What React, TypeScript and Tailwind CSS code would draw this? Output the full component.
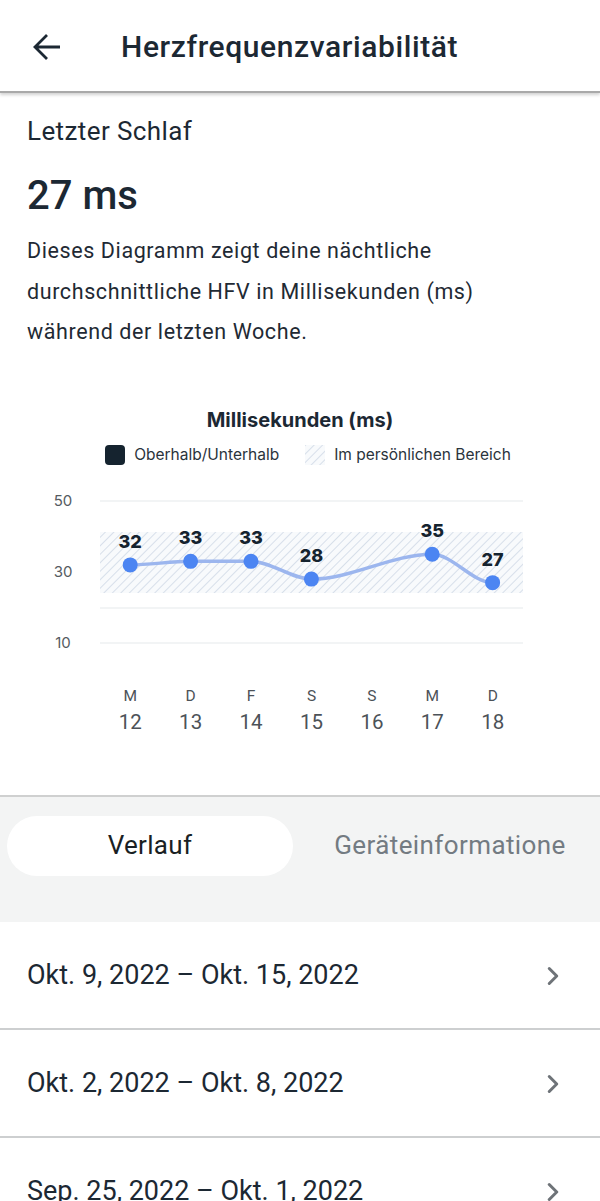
import { ChevronRight } from 'lucide-react';

const points = [
  { day: 'M', date: 12, value: 32 },
  { day: 'D', date: 13, value: 33 },
  { day: 'F', date: 14, value: 33 },
  { day: 'S', date: 15, value: 28 },
  { day: 'S', date: 16, value: null },
  { day: 'M', date: 17, value: 35 },
  { day: 'D', date: 18, value: 27 }
];

const weeks = ['Okt. 9, 2022 – Okt. 15, 2022', 'Okt. 2, 2022 – Okt. 8, 2022', 'Sep. 25, 2022 – Okt. 1, 2022'];

// plot coordinates: x columns of 60.4px starting at 100, y scale 3.55px per ms (50 ms at y=17)
const colX = (i: number) => 100 + 60.4 * i + 30.2;
const valY = (v: number) => 17 + (50 - v) * 3.55;

function HatchDefs({ id }: { id: string }) {
  return (
    <defs>
      <pattern id={id} width="6" height="6" patternUnits="userSpaceOnUse" patternTransform="rotate(45)">
        <rect width="6" height="6" fill="#f8fafc" />
        <line x1="0" y1="0" x2="0" y2="6" stroke="#d7dfea" strokeWidth="2" />
      </pattern>
    </defs>
  );
}

function Chart() {
  const plotted = points.map((p, i) => ({ ...p, x: colX(i) })).filter((p) => p.value !== null) as {
    x: number;
    value: number;
  }[];

  let d = '';
  plotted.forEach((p, i) => {
    const y = valY(p.value);
    if (i === 0) {
      d += `M${p.x},${y}`;
      return;
    }
    const prev = plotted[i - 1];
    const py = valY(prev.value);
    const dx = (p.x - prev.x) / 3;
    d += ` C${prev.x + dx},${py} ${p.x - dx},${y} ${p.x},${y}`;
  });

  return (
    <div className="mt-[54px]">
      <h3 className="text-center font-['Inter',sans-serif] text-[20px] leading-[26px] font-bold text-[#1c2833]">
        Millisekunden (ms)
      </h3>
      <div className="mt-[12px] flex h-5 items-center justify-center gap-[26px] pl-[16px] font-['Inter',sans-serif] text-[15.5px] text-[#2a333c]">
        <div className="flex items-center gap-[9px]">
          <span className="h-5 w-5 rounded-[4px] bg-[#15232f]" />
          <span>Oberhalb/Unterhalb</span>
        </div>
        <div className="flex items-center gap-[9px]">
          <svg width="20" height="20">
            <HatchDefs id="legend-hatch" />
            <rect width="20" height="20" fill="url(#legend-hatch)" />
          </svg>
          <span>Im persönlichen Bereich</span>
        </div>
      </div>

      <svg width="600" height="180" className="mt-[19px] block font-['Inter',sans-serif]">
        <HatchDefs id="band-hatch" />
        {[17, 124, 159].map((y) => (
          <line key={y} x1="100" x2="523" y1={y} y2={y} stroke="#eef0f2" strokeWidth="1.5" />
        ))}
        <rect x="100" y="48" width="423" height="61" fill="url(#band-hatch)" />
        {[
          { label: '50', y: 17 },
          { label: '30', y: 88 },
          { label: '10', y: 159 }
        ].map((t) => (
          <text key={t.label} x="63" y={t.y + 5} textAnchor="middle" fontSize="15" fill="#555b61">
            {t.label}
          </text>
        ))}
        <path d={d} fill="none" stroke="#9cb6ee" strokeWidth="3.5" strokeLinecap="round" />
        {plotted.map((p) => (
          <g key={p.x}>
            <circle cx={p.x} cy={valY(p.value)} r="7.5" fill="#4c85f2" />
            <text x={p.x} y={valY(p.value) - 17} textAnchor="middle" fontSize="18" fontWeight="800" fill="#15232f">
              {p.value}
            </text>
          </g>
        ))}
      </svg>

      <div className="mt-[22px] ml-[100px] grid w-[423px] grid-cols-7 font-['Roboto',sans-serif] text-[#4c5258]">
        {points.map((p) => (
          <div key={p.date} className="flex flex-col items-center gap-[2px]">
            <span className="text-[15.5px] leading-[20px]">{p.day}</span>
            <span className="text-[20.5px] leading-[28px]">{p.date}</span>
          </div>
        ))}
      </div>
    </div>
  );
}

export default function App() {
  return (
    <div className="h-[1201px] w-[600px] overflow-hidden bg-white font-['Roboto',sans-serif] text-[#1c2833]">
      <header className="relative z-10 flex h-[93px] items-center border-b-[2px] border-[#a9a9a9] bg-white pt-[2px] shadow-[0_2px_3px_rgba(0,0,0,0.18)]">
        <svg width="30" height="30" viewBox="0 0 30 30" className="ml-[32px]">
          <path d="M28 15H3M15 3 3 15l12 12" fill="none" stroke="#1c2833" strokeWidth="2.8" />
        </svg>
        <h1 className="ml-[59px] text-[30px] font-medium tracking-[0.6px]">Herzfrequenzvariabilität</h1>
      </header>

      <section className="px-[27px] pt-[22px]">
        <h2 className="text-[26px] leading-[32px] tracking-[0.4px]">Letzter Schlaf</h2>
        <p className="mt-[25px] text-[40px] leading-[48px] font-medium">27 ms</p>
        <p className="mt-[11px] max-w-[490px] text-[21.5px] leading-[40.5px] tracking-[0.6px] text-[#1f2a34]">
          Dieses Diagramm zeigt deine nächtliche durchschnittliche HFV in Millisekunden (ms) während der letzten Woche.
        </p>
      </section>

      <Chart />

      <div className="mt-[59px] border-t-[2px] border-[#cfd0d0] bg-[#f3f4f4] px-[7px] pt-[19px] pb-[46px]">
        <div className="flex h-[60px] items-center">
          <div className="flex h-full w-[286px] items-center justify-center rounded-full bg-white text-[26px] tracking-[0.3px] text-[#1a1f24]">
            Verlauf
          </div>
          <div className="flex h-full flex-1 items-center justify-center overflow-hidden whitespace-nowrap pl-[14px] text-[26px] tracking-[0.4px] text-[#737b82]">
            Geräteinformatione
          </div>
        </div>
      </div>

      <ul>
        {weeks.map((w) => (
          <li key={w} className="flex h-[108px] items-center justify-between border-b-[2px] border-[#cdcfd0] pt-[2px] pr-[32px] pl-[27px]">
            <span className="text-[27px]">{w}</span>
            <ChevronRight size={30} strokeWidth={2.4} className="text-[#6e7378]" />
          </li>
        ))}
      </ul>
    </div>
  );
}
